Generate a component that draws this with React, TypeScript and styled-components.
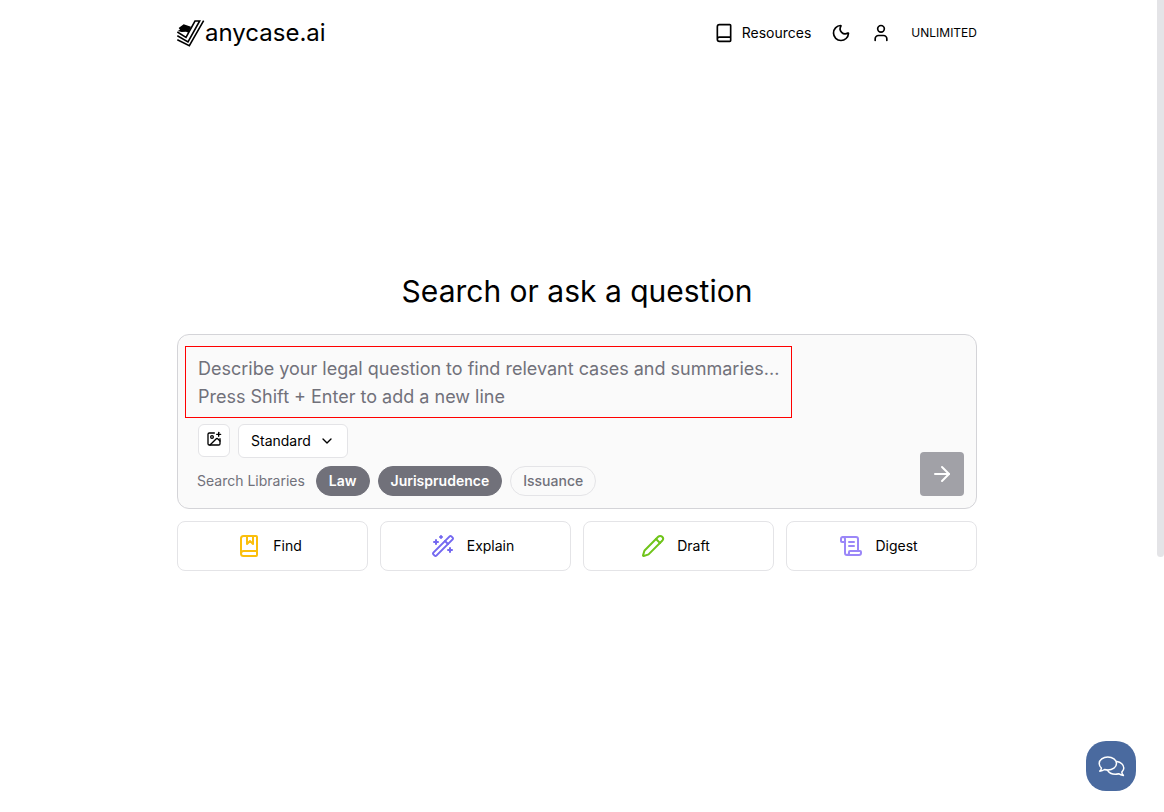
import React, { useState } from 'react';
import styled, { createGlobalStyle } from 'styled-components';
import {
  ArrowRight,
  Book,
  BookMarked,
  ChevronDown,
  ImagePlus,
  Moon,
  Pencil,
  ScrollText,
  User,
  WandSparkles,
} from 'lucide-react';

const GlobalStyle = createGlobalStyle`
  *, *::before, *::after { box-sizing: border-box; }
  body {
    margin: 0;
    background: #ffffff;
    color: #000000;
    font-family: Inter, "Liberation Sans", sans-serif;
    font-size: 14px;
    line-height: 20px;
  }
  button, select, textarea { font: inherit; color: inherit; }
  button, select { cursor: pointer; }
`;

const Shell = styled.div`
  display: flex;
  min-height: 100vh;
`;

const Page = styled.div`
  flex: 1;
  min-width: 0;
  display: flex;
  flex-direction: column;
  align-items: center;
  padding: 0 16px;
`;

const ScrollGutter = styled.div`
  width: 10px;
  padding-left: 3px;
`;

const ScrollThumb = styled.div`
  height: 557px;
  border-radius: 0 0 4px 4px;
  background: #e4e4e7;
`;

const Header = styled.header`
  width: 100%;
  max-width: 800px;
  height: 66px;
  display: flex;
  align-items: center;
  justify-content: space-between;
`;

const Brand = styled.a`
  display: flex;
  align-items: center;
  color: #000000;
  font-size: 24px;
  line-height: 32px;
  text-decoration: none;
`;

const Nav = styled.nav`
  display: flex;
  align-items: center;
  gap: 20px;
`;

const NavLink = styled.a`
  display: flex;
  align-items: center;
  gap: 8px;
  color: inherit;
  text-decoration: none;
`;

const NavButton = styled.button`
  display: flex;
  padding: 0;
  border: 0;
  background: none;
`;

const Plan = styled.span`
  font-size: 12px;
`;

const Main = styled.main`
  flex: 1;
  width: 100%;
  max-width: 800px;
  display: flex;
  flex-direction: column;
  justify-content: center;
  padding-bottom: 34px;
`;

const Title = styled.h1`
  margin: 0 0 25px;
  font-size: 30px;
  line-height: 36px;
  font-weight: 400;
  text-align: center;
`;

const SearchForm = styled.form`
  display: flex;
  align-items: flex-end;
  gap: 12px;
  padding: 11px 12px 12px 7px;
  border: 1px solid #d4d4d8;
  border-radius: 12px;
  background: #fafafa;
`;

const Fields = styled.div`
  flex: 1;
  min-width: 0;
  display: flex;
  flex-direction: column;
`;

const Question = styled.textarea`
  display: block;
  width: 100%;
  max-width: 607px;
  height: 72px;
  padding: 8px 0 6px 12px;
  border: 1px solid #ff0000;
  border-radius: 0;
  outline: none;
  resize: none;
  overflow: hidden;
  background: transparent;
  font-size: 18px;
  line-height: 28px;
  &::placeholder { color: #71717a; opacity: 1; }
`;

const Row = styled.div`
  display: flex;
  flex-wrap: wrap;
  align-items: center;
  gap: 8px;
  padding-left: 12px;
`;

const ToolRow = styled(Row)`
  align-items: flex-start;
  margin: 6px 0 8px;
  padding-left: 13px;
`;

const IconButton = styled.button`
  display: flex;
  align-items: center;
  justify-content: center;
  width: 32px;
  height: 33px;
  padding: 0 0 3px;
  border: 1px solid #e4e4e7;
  border-radius: 6px;
  background: #ffffff;
`;

const SelectWrap = styled.div`
  position: relative;
  display: flex;
  svg {
    position: absolute;
    right: 13px;
    top: 9px;
    pointer-events: none;
  }
`;

const Select = styled.select`
  appearance: none;
  width: 110px;
  height: 34px;
  padding: 0 28px 0 12px;
  border: 1px solid #e4e4e7;
  border-radius: 6px;
  background: #ffffff;
`;

const RowLabel = styled.span`
  margin-right: 3px;
  color: #71717a;
`;

const Chip = styled.button<{ $on: boolean }>`
  height: 30px;
  padding: 0 12px;
  border: 1px solid ${(p) => (p.$on ? '#71717a' : '#e4e4e7')};
  border-radius: 15px;
  background: ${(p) => (p.$on ? '#71717a' : 'transparent')};
  color: ${(p) => (p.$on ? '#ffffff' : '#71717a')};
  font-weight: ${(p) => (p.$on ? 600 : 500)};
`;

const Submit = styled.button`
  display: flex;
  align-items: center;
  justify-content: center;
  width: 44px;
  height: 44px;
  padding: 0;
  border: 0;
  border-radius: 4px;
  background: #a1a1a7;
  color: #ffffff;
`;

const Actions = styled.div`
  display: grid;
  grid-template-columns: repeat(4, 1fr);
  gap: 12px;
  margin-top: 12px;
`;

const Action = styled.button<{ $tint: string }>`
  display: flex;
  align-items: center;
  justify-content: center;
  gap: 12px;
  height: 50px;
  padding: 0 14px 0 8px;
  border: 1px solid #e4e4e7;
  border-radius: 8px;
  background: #ffffff;
  svg { color: ${(p) => p.$tint}; }
`;

const ChatButton = styled.button`
  position: fixed;
  right: 28px;
  bottom: 21px;
  display: flex;
  align-items: center;
  justify-content: center;
  width: 50px;
  height: 50px;
  padding: 0 0 0 2px;
  border: 0;
  border-radius: 20px;
  background: #4a6a9f;
  color: #ffffff;
`;

const Logo = () => (
  <svg width="28" height="28" viewBox="0 0 84 84" fill="none" aria-hidden="true">
    <path d="M5 27 20 16 42 23 35 41 27 38 14 39 2 36 9 32Z" fill="#000" />
    <path
      d="M1 39 27 55 54 6H68L33 69 1 50M1 62 37 80 80 5"
      stroke="#000"
      strokeWidth="4.8"
    />
  </svg>
);

const ChatIcon = () => (
  <svg width="28" height="21" viewBox="0 0 28 21" fill="none" stroke="currentColor" strokeWidth="1.5" strokeLinejoin="round" strokeLinecap="round" aria-hidden="true">
    <path d="M1.8 15.2C3 14.2 3.4 13 3.4 12 2 10.8 1.2 9.2 1.2 7.5 1.2 3.9 5.1 1 9.8 1c4.8 0 8.7 2.9 8.7 6.5S14.6 14 9.8 14c-1.2 0-2.3-.2-3.3-.5-1.3 1-3 1.6-4.7 1.7Z" />
    <path d="M18.8 5.6c4 .5 7 3.2 7 6.4 0 1.6-.8 3-2 4.1 0 1.2.5 2.3 1.6 3.3-1.8-.1-3.4-.6-4.8-1.7-1 .3-2.1.5-3.2.5-3.6 0-6.6-1.6-7.8-3.8" />
  </svg>
);

const libraryNames = ['Law', 'Jurisprudence', 'Issuance'];

const actions = [
  { label: 'Find', Icon: BookMarked, tint: '#fbbf0c' },
  { label: 'Explain', Icon: WandSparkles, tint: '#7468f0' },
  { label: 'Draft', Icon: Pencil, tint: '#6fc41a' },
  { label: 'Digest', Icon: ScrollText, tint: '#9b87f8' },
];

export default function App() {
  const [selected, setSelected] = useState<string[]>(['Law', 'Jurisprudence']);

  const toggle = (name: string) =>
    setSelected((now) => (now.includes(name) ? now.filter((n) => n !== name) : [...now, name]));

  return (
    <>
      <GlobalStyle />
      <Shell>
        <Page>
          <Header>
            <Brand href="#home">
              <Logo />
              anycase.ai
            </Brand>
            <Nav>
              <NavLink href="#resources">
                <Book size={20} />
                Resources
              </NavLink>
              <NavButton type="button" aria-label="Toggle theme">
                <Moon size={20} />
              </NavButton>
              <NavButton type="button" aria-label="Account">
                <User size={20} />
              </NavButton>
              <Plan>UNLIMITED</Plan>
            </Nav>
          </Header>
          <Main>
            <Title>Search or ask a question</Title>
            <SearchForm onSubmit={(e) => e.preventDefault()}>
              <Fields>
                <Question
                  aria-label="Legal question"
                  placeholder={
                    'Describe your legal question to find relevant cases and summaries...\nPress Shift + Enter to add a new line'
                  }
                />
                <ToolRow>
                  <IconButton type="button" aria-label="Add image">
                    <ImagePlus size={16} />
                  </IconButton>
                  <SelectWrap>
                    <Select aria-label="Search mode" defaultValue="Standard">
                      <option>Standard</option>
                      <option>Advanced</option>
                    </Select>
                    <ChevronDown size={16} />
                  </SelectWrap>
                </ToolRow>
                <Row role="group" aria-labelledby="libraries">
                  <RowLabel id="libraries">Search Libraries</RowLabel>
                  {libraryNames.map((name) => (
                    <Chip
                      key={name}
                      type="button"
                      $on={selected.includes(name)}
                      aria-pressed={selected.includes(name)}
                      onClick={() => toggle(name)}
                    >
                      {name}
                    </Chip>
                  ))}
                </Row>
              </Fields>
              <Submit type="submit" aria-label="Search">
                <ArrowRight size={24} />
              </Submit>
            </SearchForm>
            <Actions>
              {actions.map(({ label, Icon, tint }) => (
                <Action key={label} type="button" $tint={tint}>
                  <Icon size={24} />
                  {label}
                </Action>
              ))}
            </Actions>
          </Main>
        </Page>
        <ScrollGutter aria-hidden="true">
          <ScrollThumb />
        </ScrollGutter>
      </Shell>
      <ChatButton type="button" aria-label="Open chat">
        <ChatIcon />
      </ChatButton>
    </>
  );
}
